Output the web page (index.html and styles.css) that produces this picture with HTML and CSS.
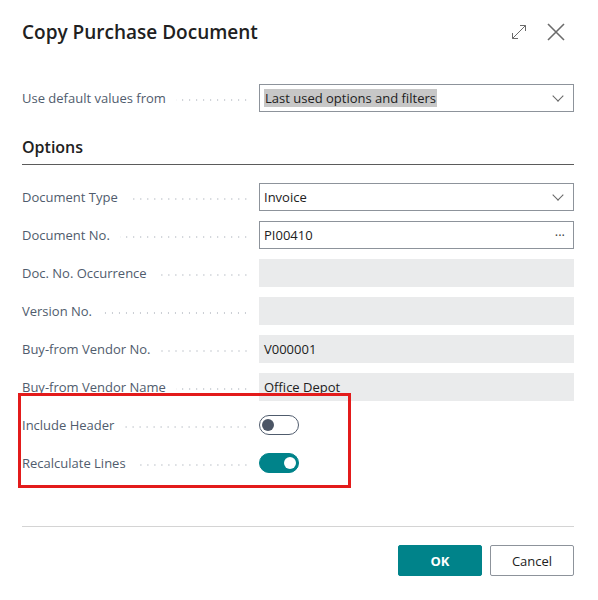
FILE: index.html
```
<!DOCTYPE html>
<html lang="en">
<head>
  <meta charset="UTF-8" />
  <title>Copy Purchase Document</title>
  <link rel="stylesheet" href="styles.css">
</head>
<body>
  <div class="dialog">
    <div class="dialog-header">
      <h1>Copy Purchase Document</h1>
      <div class="header-icons">
        <svg class="icon-expand" width="16" height="16" viewBox="0 0 16 16">
          <path d="M1.5 14.5 L14.5 1.5 M9 1.5 H14.5 V7 M1.5 9 V14.5 H7" fill="none" stroke="#6b6b6b" stroke-width="1"/>
        </svg>
        <svg class="icon-close" width="18" height="18" viewBox="0 0 18 18">
          <path d="M1 1 L17 17 M17 1 L1 17" fill="none" stroke="#6b6b6b" stroke-width="1.6"/>
        </svg>
      </div>
    </div>

    <div class="field-row first-row">
      <div class="label"><span>Use default values from</span></div>
      <div class="input select"><span class="selected-text">Last used options and filters</span><span class="chevron"></span></div>
    </div>

    <h2 class="section-title">Options</h2>

    <div class="fields">
      <div class="field-row">
        <div class="label"><span>Document Type</span></div>
        <div class="input select"><span>Invoice</span><span class="chevron"></span></div>
      </div>
      <div class="field-row">
        <div class="label"><span>Document No.</span></div>
        <div class="input"><span>PI00410</span><span class="more">&middot;&middot;&middot;</span></div>
      </div>
      <div class="field-row">
        <div class="label"><span>Doc. No. Occurrence</span></div>
        <div class="input readonly"></div>
      </div>
      <div class="field-row">
        <div class="label"><span>Version No.</span></div>
        <div class="input readonly"></div>
      </div>
      <div class="field-row">
        <div class="label"><span>Buy-from Vendor No.</span></div>
        <div class="input readonly"><span>V000001</span></div>
      </div>
      <div class="field-row">
        <div class="label"><span>Buy-from Vendor Name</span></div>
        <div class="input readonly"><span>Office Depot</span></div>
      </div>

      <div class="toggles">
        <div class="field-row">
          <div class="label"><span>Include Header</span></div>
          <div class="toggle-cell"><span class="toggle"></span></div>
        </div>
        <div class="field-row">
          <div class="label"><span>Recalculate Lines</span></div>
          <div class="toggle-cell"><span class="toggle on"></span></div>
        </div>
        <div class="highlight"></div>
      </div>
    </div>

    <div class="footer">
      <button class="btn primary">OK</button>
      <button class="btn">Cancel</button>
    </div>
  </div>
</body>
</html>
```

FILE: styles.css
```
body {
  margin: 0;
  padding: 0;
  background-color: #fff;
  font-family: "Open Sans", "Noto Sans", sans-serif;
  color: #212121;
}

.dialog {
  width: 552px;
  padding: 16px 24px 0 22px;
}

.dialog-header {
  display: flex;
  justify-content: space-between;
  align-items: center;
  height: 32px;
}

.dialog-header h1 {
  margin: 0;
  font-size: 19px;
  font-weight: 600;
  color: #212121;
}

.header-icons {
  display: flex;
  align-items: center;
  gap: 20px;
  margin-right: 9px;
}

.first-row {
  margin-top: 36px;
}

.section-title {
  margin: 24px 0 0;
  padding-bottom: 6px;
  font-size: 16px;
  font-weight: 600;
  color: #212121;
  border-bottom: 1px solid #5b5b5b;
}

.fields {
  margin-top: 18px;
  display: flex;
  flex-direction: column;
  gap: 10px;
}

.field-row {
  display: grid;
  grid-template-columns: 237px 315px;
  height: 28px;
  align-items: center;
}

.label {
  display: flex;
  align-items: center;
  font-size: 13px;
  color: #505c6d;
  padding-right: 10px;
}

.label::after {
  content: "";
  flex: 1;
  height: 2px;
  margin-left: 10px;
  margin-top: 4px;
  background-image: radial-gradient(circle, #c9cdd3 0.8px, transparent 1.1px);
  background-size: 7px 2px;
  background-repeat: repeat-x;
  background-position: right center;
}

.input {
  box-sizing: border-box;
  height: 28px;
  display: flex;
  align-items: center;
  justify-content: space-between;
  padding: 0 8px 0 4px;
  border: 1px solid #8d939b;
  font-size: 13px;
  color: #212121;
}

.input.readonly {
  border-color: #eaebec;
  background-color: #eaebec;
}

.selected-text {
  background-color: #c7c7c7;
  padding: 0 1px;
}

.chevron {
  width: 7px;
  height: 7px;
  border-right: 1px solid #666;
  border-bottom: 1px solid #666;
  transform: rotate(45deg);
  margin: -4px 3px 0 0;
}

.more {
  font-size: 13px;
  color: #444;
}

.toggles {
  position: relative;
  display: flex;
  flex-direction: column;
  gap: 10px;
}

.toggle-cell {
  display: flex;
  align-items: center;
}

.toggle {
  box-sizing: border-box;
  position: relative;
  width: 40px;
  height: 20px;
  border: 1px solid #505c6d;
  border-radius: 10px;
  background-color: #fff;
}

.toggle::after {
  content: "";
  position: absolute;
  top: 3px;
  left: 2px;
  width: 12px;
  height: 12px;
  border-radius: 50%;
  background-color: #4b5565;
}

.toggle.on {
  border-color: #00838a;
  background-color: #00838a;
}

.toggle.on::after {
  left: auto;
  right: 2px;
  background-color: #fff;
}

.highlight {
  position: absolute;
  top: -18px;
  left: -4px;
  width: 327px;
  height: 89px;
  border: 3px solid #e31b1b;
  pointer-events: none;
}

.footer {
  margin-top: 49px;
  padding-top: 18px;
  border-top: 1px solid #d4d4d4;
  display: flex;
  justify-content: flex-end;
  gap: 8px;
}

.btn {
  width: 84px;
  height: 31px;
  font-family: inherit;
  font-size: 13px;
  font-weight: 400;
  color: #212121;
  background-color: #fff;
  border: 1px solid #8d939b;
  border-radius: 2px;
}

.btn.primary {
  color: #fff;
  background-color: #00838a;
  border-color: #00838a;
  font-weight: 700;
}
```
